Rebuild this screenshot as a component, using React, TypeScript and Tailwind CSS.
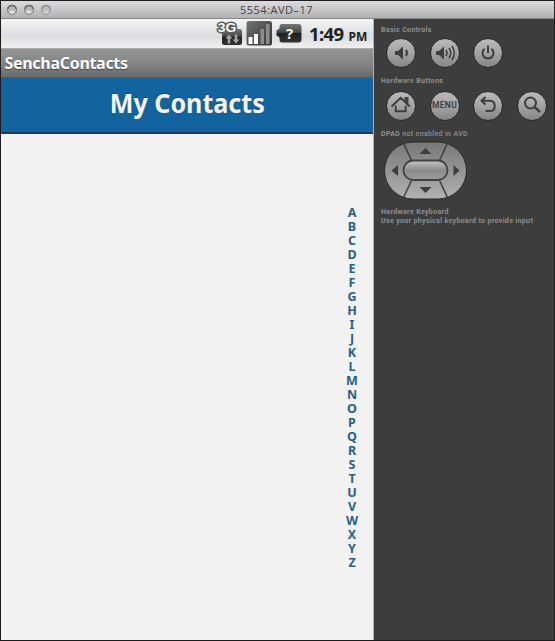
import type { ReactNode } from "react";

const letters = "ABCDEFGHIJKLMNOPQRSTUVWXYZ".split("");

function TrafficLight({ dim = false }: { dim?: boolean }) {
  return (
    <svg width="12" height="12" viewBox="0 0 12 12" className={dim ? "opacity-60" : ""}>
      <circle cx="6" cy="6" r="4.6" fill="#b5b5b8" stroke="#858588" strokeWidth="1" />
      <path d="M1.800 5a4.300 4.300 0 0 1 8.400 0" fill="none" stroke="#68686c" strokeWidth="1.500" />
      <ellipse cx="6" cy="8" rx="2.6" ry="1.8" fill="#dededf" />
    </svg>
  );
}

function StatusIcons() {
  return (
    <svg width="86" height="28" viewBox="216 19 86 28" className="shrink-0">
      <defs>
        <linearGradient id="chip" x1="0" y1="0" x2="0" y2="1">
          <stop offset="0" stopColor="#747676" />
          <stop offset="0.45" stopColor="#454747" />
          <stop offset="0.5" stopColor="#202222" />
          <stop offset="1" stopColor="#303232" />
        </linearGradient>
        <linearGradient id="signal" x1="0" y1="0" x2="1" y2="1">
          <stop offset="0" stopColor="#747676" />
          <stop offset="0.5" stopColor="#505252" />
          <stop offset="1" stopColor="#333535" />
        </linearGradient>
      </defs>
      <rect x="222" y="29" width="20" height="16" rx="2.5" fill="url(#chip)" />
      <text
        x="217.800"
        y="32"
        textLength="18.500"
        lengthAdjust="spacingAndGlyphs"
        fill="#fafafa"
        stroke="#5c5e5e"
        strokeWidth="3"
        strokeLinejoin="round"
        paintOrder="stroke"
        className="font-['Liberation_Sans',sans-serif] text-[13px] font-bold"
      >
        3G
      </text>
      <path d="M229 34.500l3.500 4h-2.200v5h-2.600v-5h-2.200zM236 43.500l-3.500-4h2.200v-5h2.600v5h2.200z" fill="#a1a3a3" />
      <rect x="246.500" y="21" width="25.500" height="24.500" rx="2.500" fill="url(#signal)" />
      <rect x="248.500" y="37" width="4" height="7" fill="#fff" />
      <rect x="254" y="34" width="4" height="10" fill="#fff" />
      <rect x="260.500" y="29" width="3.500" height="15" fill="#8a8c8c" />
      <rect x="266" y="24" width="3.500" height="20" fill="#8a8c8c" />
      <path d="M282 24h16.500q3 0 3 3v12.500q0 3-3 3H282q-2.500 0-2.500-3v-2l-3-2v-5l3-2V27q0-3 2.500-3z" fill="url(#chip)" />
      <text x="289.500" y="39" textAnchor="middle" fill="#f0f0f0" className="text-[15px] font-bold">
        ?
      </text>
    </svg>
  );
}

function RoundKey({ children }: { children: ReactNode }) {
  return (
    <div className="flex size-[30px] shrink-0 items-center justify-center rounded-full border border-[#292929] bg-linear-to-b from-[#b9bbbb] via-[#a2a4a4] to-[#858787]">
      {children}
    </div>
  );
}

function KeyIcon({ children }: { children: ReactNode }) {
  return (
    <svg width="28" height="28" viewBox="0 0 28 28" fill="none" stroke="#3d3d3d" strokeWidth="2">
      {children}
    </svg>
  );
}

function Speaker({ x }: { x: number }) {
  return <path d={`M${x} 12h3l5-4.500v13l-5-4.500h-3z`} fill="#3d3d3d" stroke="none" />;
}

function Dpad() {
  return (
    <svg width="83" height="59" viewBox="0 0 83 59" className="mt-[2px] ml-[2.500px] block">
      <defs>
        <linearGradient id="pad" x1="0" y1="0" x2="0" y2="1">
          <stop offset="0" stopColor="#777979" />
          <stop offset="1" stopColor="#b0b2b2" />
        </linearGradient>
        <linearGradient id="ok" x1="0" y1="0" x2="0" y2="1">
          <stop offset="0" stopColor="#c6c8c8" />
          <stop offset="0.5" stopColor="#8a8c8c" />
          <stop offset="1" stopColor="#9c9e9e" />
        </linearGradient>
      </defs>
      <rect x="0.500" y="1" width="82" height="57" rx="28.500" fill="url(#pad)" stroke="#292929" />
      <path d="M19.500 2l8 17.500M63.500 2l-8 17.500M19.500 56.500l8-17M63.500 56.500l-8-17" stroke="#3c3d3d" strokeWidth="1.500" />
      <rect x="19.500" y="19.500" width="44" height="19.500" rx="9.700" fill="url(#ok)" stroke="#414243" strokeWidth="1.800" />
      <path d="M35.500 13h12l-6-6zM35.500 46h12l-6 6zM14 24v11l-6.500-5.500zM69.500 24v11l6-5.500z" fill="#3d3e3e" />
    </svg>
  );
}

function Label({ children }: { children: ReactNode }) {
  return (
    <div className="text-[7px] leading-[9px] font-bold tracking-[0.35px] whitespace-nowrap text-[#8e9090]">
      {children}
    </div>
  );
}

export default function App() {
  return (
    <div className="flex h-[641px] w-[555px] flex-col overflow-hidden border border-[#1d1b1e] bg-[#3d3d3d] font-['Noto_Sans',sans-serif]">
      <header className="flex h-[18px] shrink-0 items-center border-b border-[#858787] bg-linear-to-b from-[#dedbe0] to-[#b1b3b3] pl-[5px]">
        <div className="flex w-[57px] gap-[5px]">
          <TrafficLight />
          <TrafficLight />
          <TrafficLight dim />
        </div>
        <h1 className="pb-px pl-[177px] font-['Open_Sans',sans-serif] text-[11px] leading-none tracking-[0.5px] text-[#454547]">
          5554:AVD–17
        </h1>
      </header>
      <div className="flex min-h-0 flex-1">
        <main className="flex w-[373px] shrink-0 flex-col border-r border-[#b1b3b3] bg-[#f2f2f2]">
          <div className="flex h-[29px] shrink-0 bg-linear-to-b from-[#f5f5f5] via-[#dbdcdf] via-60% to-[#f0f0f1] pl-[215px]">
            <StatusIcons />
            <div className="flex items-baseline gap-[5px] pl-[7px] text-[#1e2020]">
              <span className="text-[18.500px] leading-[29px] font-bold tracking-[-0.6px]">1:49</span>
              <span className="text-[12px] font-bold">PM</span>
            </div>
          </div>
          <div className="flex h-[30px] shrink-0 items-center border-t border-b border-t-[#a8aaaa] border-b-[#55595c] bg-linear-to-b from-[#949696] via-[#858787] to-[#696b6b] pl-[3.500px]">
            <h2 className="pb-px text-[16px] leading-none font-bold tracking-[-0.3px] text-white [text-shadow:0_1px_1px_#444]">
              SenchaContacts
            </h2>
          </div>
          <div className="flex h-[56px] shrink-0 items-center justify-center border-b-2 border-[#293a46] bg-[#13639f] pb-[4px]">
            <h2 className="scale-x-[0.965] text-[26px] leading-none font-bold text-[#f4f4f4] [text-shadow:0_-1px_0_#304657]">
              My Contacts
            </h2>
          </div>
          <nav className="mt-[72px] mr-[8px] flex w-[26px] flex-col self-end text-center text-[12.500px] leading-[14px] font-bold text-[#2a608a]">
            {letters.map((letter) => (
              <span key={letter}>{letter}</span>
            ))}
          </nav>
        </main>
        <aside className="flex-1 pt-[7px] pl-[7px] font-[Roboto,sans-serif]">
          <Label>Basic Controls</Label>
          <div className="mt-[2.500px] ml-[5px] flex gap-[13.500px]">
            <RoundKey>
              <KeyIcon>
                <Speaker x={8} />
                <path d="M19 11q2 3 0 6" />
              </KeyIcon>
            </RoundKey>
            <RoundKey>
              <KeyIcon>
                <Speaker x={5} />
                <path d="M15 11q2 3 0 6M18 9q3.500 5 0 10M21 7q4.500 7 0 14" strokeWidth="1.500" />
              </KeyIcon>
            </RoundKey>
            <RoundKey>
              <KeyIcon>
                <path d="M10.500 9.700a5.500 5.500 0 1 0 7 0M14 6.500v7.500" />
              </KeyIcon>
            </RoundKey>
          </div>
          <div className="mt-[9.500px]">
            <Label>Hardware Buttons</Label>
          </div>
          <div className="mt-[4.500px] ml-[5px] flex gap-[13.500px]">
            <RoundKey>
              <KeyIcon>
                <path d="M4.500 14.500L13.700 5.800l9.200 8.700M8.700 13.500v5.700h10v-5.700M18.500 9.500V6h2v5.500" strokeWidth="1.900" />
              </KeyIcon>
            </RoundKey>
            <RoundKey>
              <span className="text-[8.500px] leading-none font-semibold tracking-[0.3px] text-[#3d3d3d]">MENU</span>
            </RoundKey>
            <RoundKey>
              <KeyIcon>
                <path d="M11.500 5L7.500 8.700l4 3.800M8 8.700h7.500q5.200 0 5.200 5.200t-5.200 5.200h-4" />
              </KeyIcon>
            </RoundKey>
            <RoundKey>
              <KeyIcon>
                <circle cx="12.500" cy="11" r="5.500" />
                <path d="M16.500 15l5.500 5" strokeWidth="2.400" />
              </KeyIcon>
            </RoundKey>
          </div>
          <div className="mt-[9px]">
            <Label>
              DPAD <span className="font-medium">not enabled in AVD</span>
            </Label>
          </div>
          <Dpad />
          <div className="mt-[8.500px]">
            <Label>Hardware Keyboard</Label>
            <Label>Use your physical keyboard to provide input</Label>
          </div>
        </aside>
      </div>
    </div>
  );
}
